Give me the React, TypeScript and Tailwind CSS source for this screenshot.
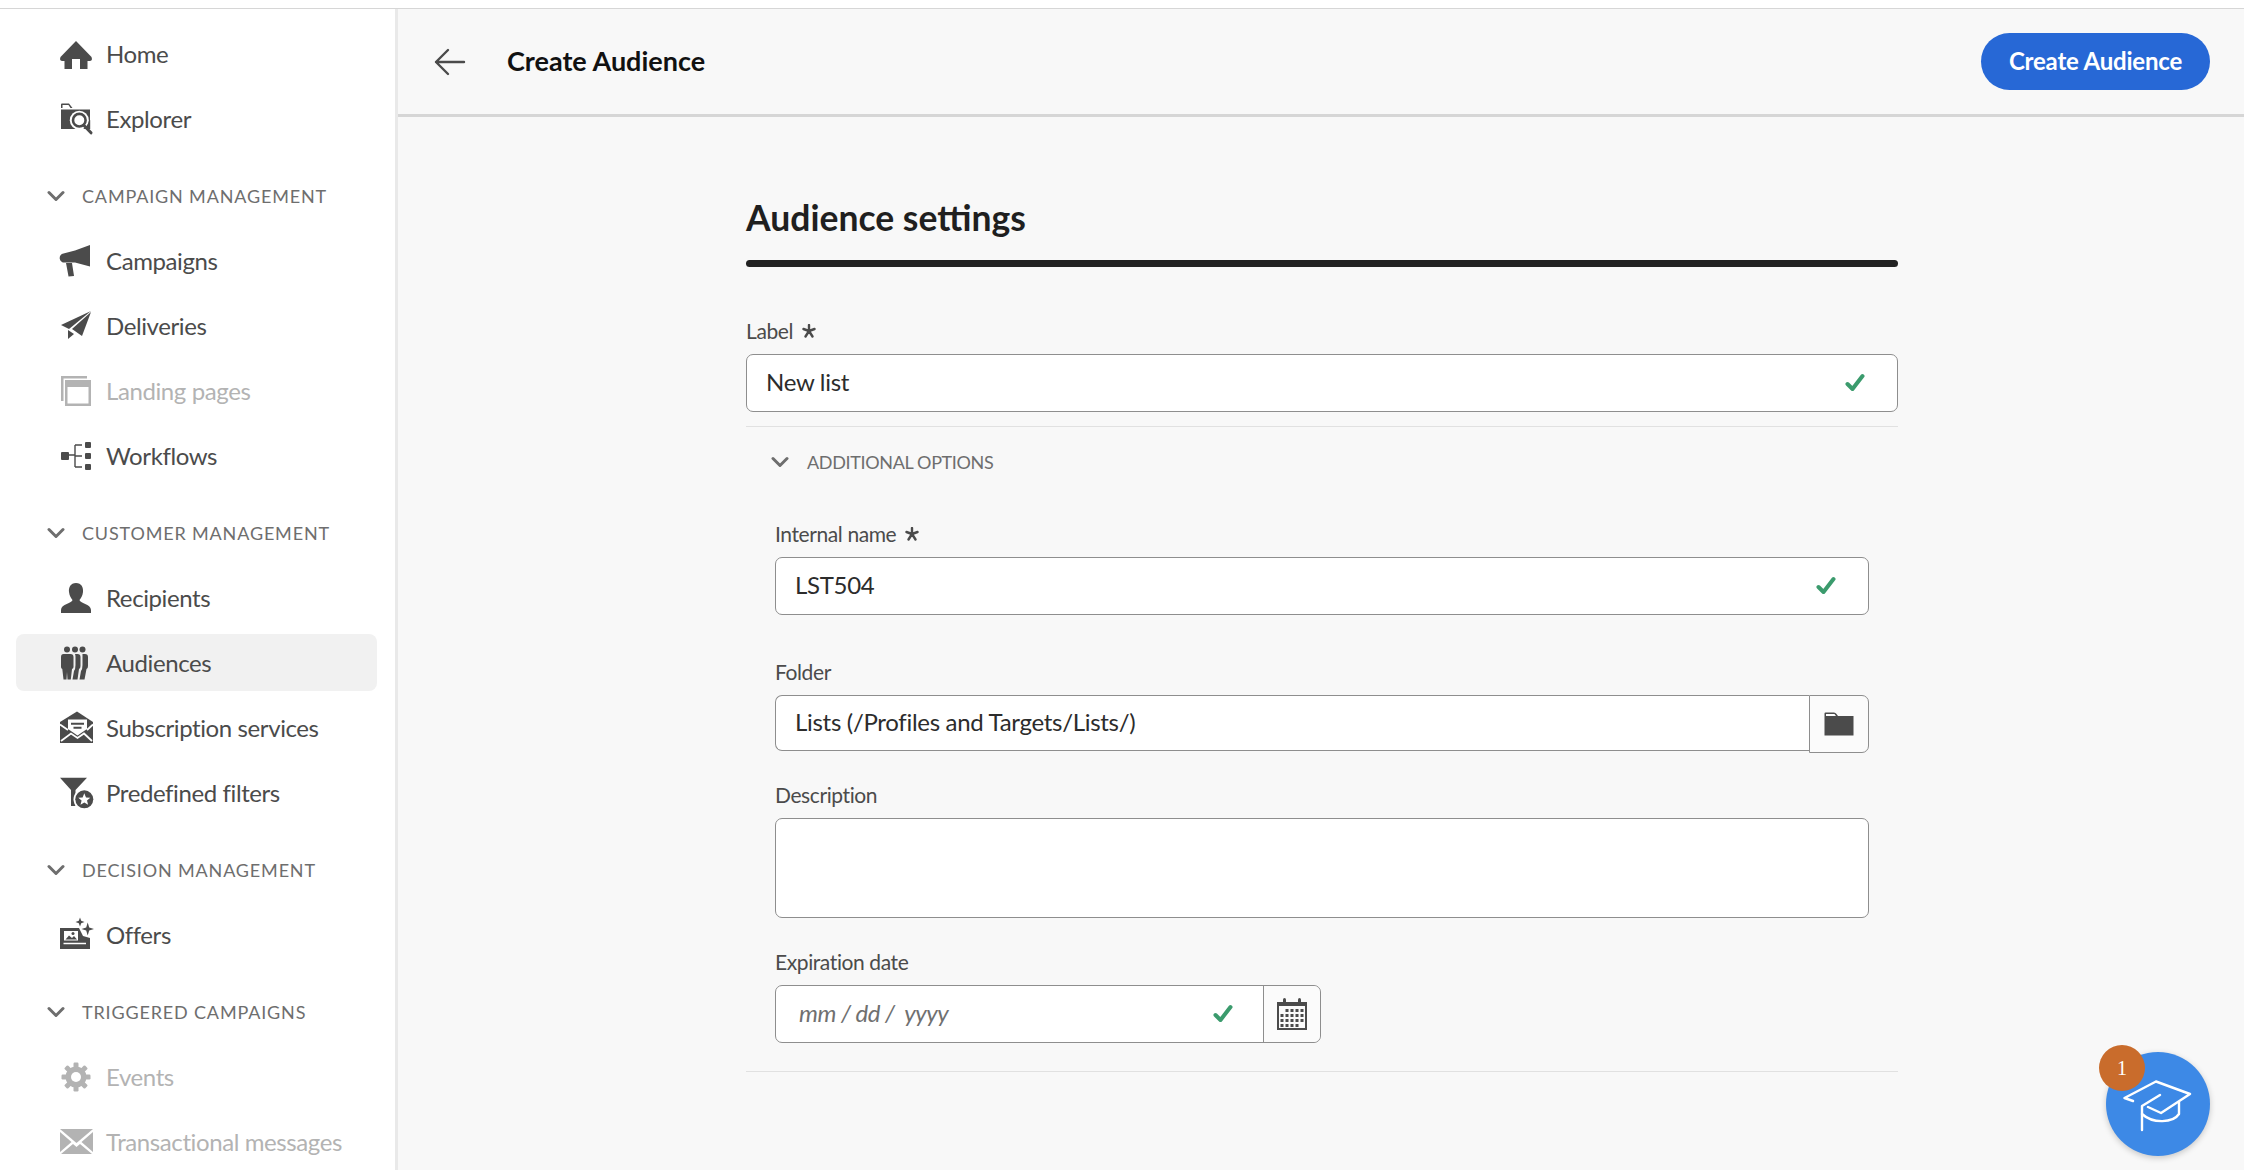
import type { ReactNode } from 'react'

const font = "font-['Lato','Open_Sans',sans-serif]"

const Svg = ({ children, className = 'w-[36px] h-[36px]' }: { children: ReactNode; className?: string }) => (
  <svg viewBox="0 0 36 36" fill="currentColor" className={`shrink-0 ${className}`}>
    {children}
  </svg>
)

const HomeIcon = () => (
  <Svg>
    <path d="M18 5 L2.500 21 Q1 25 4.500 25 H6.500 V33 H14 V23 H22 V33 H29.500 V25 H31.500 Q35 25 33.500 21 Z" />
  </Svg>
)
const ExplorerIcon = () => (
  <Svg>
    <path d="M3 7 V3.500 Q3 2.500 4 2.500 H11 L14.500 7 H12.500 L10.500 4 H4.500 V7 Z" />
    <rect x="3" y="8.500" width="29" height="19.500" />
    <circle cx="21.300" cy="19.200" r="9.500" fill="#fff" />
    <path d="M32.200 19 V28 H26 L28 26 Z" />
    <circle cx="21.300" cy="19.200" r="6.300" fill="none" stroke="currentColor" strokeWidth="2.600" />
    <path d="M26 24.500 L33 31.800" stroke="currentColor" strokeWidth="3" strokeLinecap="round" />
  </Svg>
)
const CampaignsIcon = () => (
  <Svg>
    <path d="M32 2 V23.500 L17 19.500 H7 A4.500 4.500 0 0 1 5.500 10.500 L17 7.500 Z" />
    <path d="M8 20 H14 L16 33 L10.500 33.500 Z" />
  </Svg>
)
const DeliveriesIcon = () => (
  <Svg>
    <path d="M33 3 L3 17 L11 21 Z" />
    <path d="M33 4 L14 21 L24 28 Z" />
    <path d="M10 22 L16 26 L10 31 Z" />
  </Svg>
)
const LandingIcon = () => (
  <Svg>
    <path d="M3 3 H29 V5.500 H5.500 V28 H3 Z" />
    <path fillRule="evenodd" d="M7 7 H33 V33 H7 Z M9.500 14 V30.500 H30.500 V14 Z" />
  </Svg>
)
const WorkflowsIcon = () => (
  <Svg>
    <rect x="3" y="14" width="8" height="8" rx="1" />
    <rect x="27" y="4" width="6" height="6" rx="1" />
    <rect x="27" y="15" width="6" height="6" rx="1" />
    <rect x="27" y="26" width="6" height="6" rx="1" />
    <path d="M11 17 H17 M17 7 H24 M17 18 H24 M17 29 H24 M17 7 V29" fill="none" stroke="currentColor" strokeWidth="1.400" />
  </Svg>
)
const RecipientsIcon = () => (
  <Svg>
    <path d="M18 3 C12.500 3 10.500 7.500 11 12 C11.500 16 13 18 14.500 20 C14.500 23 3 24 3 30 V33 H33 V30 C33 24 21.500 23 21.500 20 C23 18 24.500 16 25 12 C25.500 7.500 23.500 3 18 3 Z" />
  </Svg>
)
const AudiencesIcon = () => (
  <Svg>
    <circle cx="9" cy="4.500" r="3" />
    <circle cx="17" cy="4.500" r="3" />
    <circle cx="24.500" cy="4.500" r="3" />
    <path d="M5.500 9 H12.500 Q15.500 9 15.500 12 V22 Q15.500 23.500 14 24 L12.800 34.500 H9.500 L9 27 L8.500 34.500 H5.500 L4.300 24 Q3 23.500 3 22 V12 Q3 9 5.500 9 Z" />
    <path d="M17 9 H19.500 Q22.500 9 22.500 12 V21 Q22.500 23.500 21 24 L19.500 34.500 H14.500 L16 26 Q17.500 24 17.500 20 V12 Q17.500 10 17 9 Z" />
    <path d="M24.500 9 H27 Q30 9 30 12 V21 Q30 23.500 28.500 24 L26.500 34.500 H21.500 L23 26 Q24.500 24 24.500 20 V12 Z" />
  </Svg>
)
const SubscriptionIcon = () => (
  <Svg className="w-[38px] h-[36px]">
    <path d="M19 1.500 L35 12 V33 H2 V12 Z" />
    <path d="M10 9.500 H29 V19 L19.500 25.500 L10 19 Z" fill="#fff" />
    <path d="M13 13.800 H26 M15.500 17.800 H23.500" fill="none" stroke="currentColor" strokeWidth="2" />
    <path d="M2 14.500 L10 20 M35 14.500 L29 20 M3 31 L13 23.500 L19.500 28 L26 23.500 L34 31" fill="none" stroke="#fff" strokeWidth="1.800" />
  </Svg>
)
const FiltersIcon = () => (
  <Svg className="w-[38px] h-[36px]">
    <path d="M2 2.700 H29 L17.500 15 V31 H13 V15 Z" />
    <circle cx="26.300" cy="24.300" r="10.800" fill="#fff" />
    <circle cx="26.300" cy="24.300" r="9" />
    <path d="M26.300 18.300 L28 22.400 L32.300 22.700 L29 25.500 L30.100 29.800 L26.300 27.500 L22.500 29.800 L23.600 25.500 L20.300 22.700 L24.600 22.400 Z" fill="#fff" />
  </Svg>
)
const OffersIcon = () => (
  <Svg className="w-[38px] h-[36px]">
    <path fillRule="evenodd" d="M2 11 H21 L25 19 L32 21 V32 H2 Z M6 14 V23.500 H20 V14 Z M5.500 25.800 V27.300 H28 V25.800 Z" />
    <path d="M7.500 22.500 L11 18.500 L14 21 L16 19 L19 22.500 Z" />
    <circle cx="15" cy="16.500" r="1.500" />
    <path d="M22 0.500 L23.200 3.800 L26.500 5 L23.200 6.200 L22 9.500 L20.800 6.200 L17.500 5 L20.800 3.800 Z" />
    <path d="M29.700 5.500 L31.200 10.500 L36 12 L31.200 13.500 L29.700 18.500 L28.200 13.500 L23.500 12 L28.200 10.500 Z" />
  </Svg>
)
const EventsIcon = () => (
  <Svg>
    <circle cx="18" cy="18" r="10.500" />
    {[0, 45, 90, 135, 180, 225, 270, 315].map((deg) => (
      <rect key={deg} x="15.500" y="3.500" width="5" height="7" rx="1.200" transform={`rotate(${deg} 18 18)`} />
    ))}
    <circle cx="18" cy="18" r="5" fill="#fff" />
  </Svg>
)
const MailIcon = () => (
  <Svg className="w-[38px] h-[36px]">
    <path d="M2 5 H35 L18.500 19 Z" />
    <path d="M2 8 L13.500 18 L2 28 Z M35 8 L23.500 18 L35 28 Z" />
    <path d="M3 30 L15 20 L18.500 23 L22 20 L34 30 Z" />
  </Svg>
)

const Chevron = ({ className }: { className: string }) => (
  <svg viewBox="0 0 18 12" className={className} fill="none" stroke="currentColor" strokeWidth="3" strokeLinecap="round" strokeLinejoin="round">
    <path d="M2 2.500 L9 9.500 L16 2.500" />
  </svg>
)

const Check = () => (
  <svg viewBox="0 0 20 20" className="h-[20px] w-[20px] text-[#3b9b6d]" fill="none" stroke="currentColor" strokeWidth="4" strokeLinecap="round" strokeLinejoin="round">
    <path d="M2.500 11 L7.500 16 L17.500 3" />
  </svg>
)

const Asterisk = () => (
  <svg viewBox="0 0 14 14" className="ml-[9px] h-[14px] w-[14px] text-[#4b4b4b]" fill="none" stroke="currentColor" strokeWidth="2.400" strokeLinecap="round">
    <path d="M7 1 V7 M7 7 L1.500 5 M7 7 L12.500 5 M7 7 L3.500 12.500 M7 7 L10.500 12.500" />
  </svg>
)

function NavItem({ icon, label, active, disabled }: { icon: ReactNode; label: string; active?: boolean; disabled?: boolean }) {
  return (
    <div
      className={`my-[4px] flex h-[57px] shrink-0 items-center gap-[12px] rounded-[8px] pl-[42px] text-[24px] tracking-[-0.4px] ${
        active ? 'bg-[#f1f1f1]' : ''
      } ${disabled ? 'text-[#b3b3b3]' : 'text-[#4b4b4b]'}`}
    >
      <span className="flex w-[36px] justify-center">{icon}</span>
      <span className="whitespace-nowrap">{label}</span>
    </div>
  )
}

function Section({ title }: { title: string }) {
  return (
    <div className="mt-[25px] mb-[12px] flex h-[40px] shrink-0 items-center pl-[31px] text-[#6e6e6e]">
      <Chevron className="h-[12px] w-[18px]" />
      <span className="ml-[17px] whitespace-nowrap text-[18px] tracking-[0.84px]">{title}</span>
    </div>
  )
}

function Sidebar() {
  return (
    <aside className="flex h-full w-[398px] shrink-0 flex-col overflow-hidden border-r-[3px] border-[#e9e9e9] bg-white pt-[12px] pr-[18px] pl-[16px]">
      <NavItem icon={<HomeIcon />} label="Home" />
      <NavItem icon={<ExplorerIcon />} label="Explorer" />
      <Section title="CAMPAIGN MANAGEMENT" />
      <NavItem icon={<CampaignsIcon />} label="Campaigns" />
      <NavItem icon={<DeliveriesIcon />} label="Deliveries" />
      <NavItem icon={<LandingIcon />} label="Landing pages" disabled />
      <NavItem icon={<WorkflowsIcon />} label="Workflows" />
      <Section title="CUSTOMER MANAGEMENT" />
      <NavItem icon={<RecipientsIcon />} label="Recipients" />
      <NavItem icon={<AudiencesIcon />} label="Audiences" active />
      <NavItem icon={<SubscriptionIcon />} label="Subscription services" />
      <NavItem icon={<FiltersIcon />} label="Predefined filters" />
      <Section title="DECISION MANAGEMENT" />
      <NavItem icon={<OffersIcon />} label="Offers" />
      <Section title="TRIGGERED CAMPAIGNS" />
      <NavItem icon={<EventsIcon />} label="Events" disabled />
      <NavItem icon={<MailIcon />} label="Transactional messages" disabled />
    </aside>
  )
}

const Label = ({ text, required, className }: { text: string; required?: boolean; className: string }) => (
  <div className={`flex h-[30px] items-center text-[21px] tracking-[-0.4px] text-[#4b4b4b] ${className}`}>
    {text}
    {required && <Asterisk />}
  </div>
)

const TextInput = ({ value }: { value: string }) => (
  <div className="mt-[8px] flex h-[58px] items-center justify-between rounded-[7px] border border-[#8e8e8e] bg-white pr-[32px] pl-[19px] text-[24px] tracking-[-0.3px] text-[#2c2c2c]">
    <span className="pb-[2px]">{value}</span>
    <Check />
  </div>
)

function FormPanel() {
  return (
    <div className="mx-auto w-[1152px] pt-[79px]">
      <h2 className="h-[44px] text-[35.500px] leading-[44px] font-bold text-[#1f1f1f]">Audience settings</h2>
      <div className="mt-[20px] h-[7px] rounded-full bg-[#222222]" />

      <Label text="Label" required className="mt-[49px]" />
      <TextInput value="New list" />
      <div className="mt-[14px] h-px bg-[#e1e1e1]" />

      <div className="mt-[15px] flex h-[40px] items-center pl-[25px] text-[#6e6e6e]">
        <Chevron className="h-[12px] w-[18px]" />
        <span className="ml-[18px] text-[18px] tracking-[-0.35px]">ADDITIONAL OPTIONS</span>
      </div>

      <div className="mx-[29px]">
        <Label text="Internal name" required className="mt-[37px]" />
        <TextInput value="LST504" />

        <Label text="Folder" className="mt-[42px]" />
        <div className="mt-[8px] flex h-[58px]">
          <div className="flex h-[56px] flex-1 items-center rounded-l-[7px] border border-r-0 border-[#8e8e8e] bg-white pb-[2px] pl-[19px] text-[24px] tracking-[-0.3px] text-[#2c2c2c]">
            Lists (/Profiles and Targets/Lists/)
          </div>
          <div className="flex h-[58px] w-[60px] items-center justify-center rounded-r-[7px] border border-[#8e8e8e] bg-[#fbfbfb] text-[#4b4b4b]">
            <svg viewBox="0 0 30 24" className="h-[24px] w-[30px]" fill="currentColor">
              <path d="M0.500 1.500 Q0.500 0.500 1.500 0.500 H10 Q11.500 0.500 12.500 2 L14 4 H29.500 V23.500 H0.500 Z" />
              <path d="M2 4 V2 H10.500 L12 4 Z" fill="#fff" />
            </svg>
          </div>
        </div>

        <Label text="Description" className="mt-[27px]" />
        <div className="mt-[8px] h-[100px] rounded-[7px] border border-[#8e8e8e] bg-white" />

        <Label text="Expiration date" className="mt-[29px]" />
        <div className="mt-[8px] flex h-[58px] w-[546px] rounded-[7px] border border-[#8e8e8e] bg-white">
          <div className="flex flex-1 items-center justify-between pr-[30px] pl-[23px] text-[24px] tracking-[-0.5px] text-[#707070] italic">
            <span className="pb-[2px] whitespace-pre">mm / dd /  yyyy</span>
            <Check />
          </div>
          <div className="flex w-[57px] items-center justify-center rounded-r-[7px] border-l border-[#8e8e8e] bg-[#fbfbfb] text-[#4b4b4b]">
            <svg viewBox="0 0 30 32" className="h-[32px] w-[30px]" fill="currentColor">
              <path fillRule="evenodd" d="M0 4 H30 V32 H0 Z M2 8 V30 H28 V8 Z" />
              <rect x="6" y="0" width="3" height="7" rx="1.500" />
              <rect x="21" y="0" width="3" height="7" rx="1.500" />
              {[11, 16, 21, 26].map((y) =>
                [5, 10, 15, 20, 25].map((x) =>
                  (y === 11 && x === 5) || (y === 26 && x === 25) ? null : <rect key={`${x}-${y}`} x={x - 1.500} y={y} width="3" height="3" />
                )
              )}
            </svg>
          </div>
        </div>
      </div>

      <div className="mt-[28px] h-px bg-[#e1e1e1]" />
    </div>
  )
}

function HelpButton() {
  return (
    <div className="absolute top-[1052px] left-[2106px] flex h-[104px] w-[104px] items-center justify-center rounded-full bg-[#3d89e6] shadow-[0_2px_6px_rgba(0,0,0,0.2)]">
      <svg viewBox="0 0 70 52" className="mt-[4px] h-[52px] w-[70px]" fill="none" stroke="#fff" strokeWidth="2.400" strokeLinecap="round" strokeLinejoin="round">
        <path d="M33 1.500 L67 14 L38 33 L25 27 M10 21 L1.500 18 L33 1.500" />
        <path d="M37 15 L19 26 V50" />
        <path d="M19 34 C30 44 50 43 56 34 V22" />
      </svg>
      <div className="absolute -top-[7px] -left-[7px] flex h-[46px] w-[46px] items-center justify-center rounded-full bg-[#c96c2c] font-['Liberation_Serif',serif] text-[20px] text-white">
        1
      </div>
    </div>
  )
}

export default function App() {
  return (
    <div className={`relative flex h-[1170px] w-[2244px] flex-col overflow-hidden bg-white ${font}`}>
      <div className="h-[9px] shrink-0 border-b border-[#d6d6d6] bg-white" />
      <div className="flex min-h-0 flex-1">
        <Sidebar />
        <main className="min-w-0 flex-1 bg-[#f8f8f8] pl-[2px]">
          <header className="-ml-[2px] flex h-[108px] items-center justify-between border-b-[3px] border-[#d6d6d6] pr-[34px] pl-[36px]">
            <div className="flex items-center">
              <svg viewBox="0 0 32 28" className="h-[28px] w-[32px] text-[#4b4b4b]" fill="none" stroke="currentColor" strokeWidth="2.400" strokeLinecap="round" strokeLinejoin="round">
                <path d="M30 14 H2 M14 2 L2 14 L14 26" />
              </svg>
              <h1 className="ml-[41px] text-[27px] font-bold text-[#111111]">Create Audience</h1>
            </div>
            <button type="button" className="h-[57px] w-[229px] rounded-full bg-[#2768d6] pb-[2px] text-[24px] font-bold tracking-[-0.2px] text-white">
              Create Audience
            </button>
          </header>
          <FormPanel />
        </main>
      </div>
      <HelpButton />
    </div>
  )
}
